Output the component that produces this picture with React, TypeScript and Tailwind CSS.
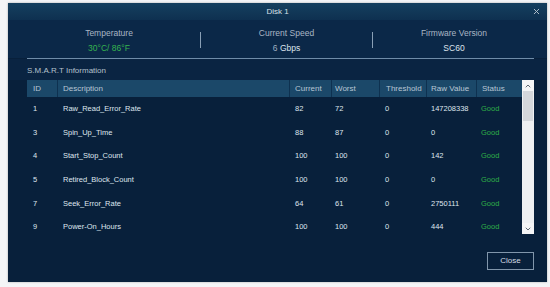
import { ChevronUp, ChevronDown, X } from "lucide-react"

const rows = [
  { id: "1", desc: "Raw_Read_Error_Rate", cur: "82", worst: "72", th: "0", raw: "147208338" },
  { id: "3", desc: "Spin_Up_Time", cur: "88", worst: "87", th: "0", raw: "0" },
  { id: "4", desc: "Start_Stop_Count", cur: "100", worst: "100", th: "0", raw: "142" },
  { id: "5", desc: "Retired_Block_Count", cur: "100", worst: "100", th: "0", raw: "0" },
  { id: "7", desc: "Seek_Error_Rate", cur: "64", worst: "61", th: "0", raw: "2750111" },
  { id: "9", desc: "Power-On_Hours", cur: "100", worst: "100", th: "0", raw: "444" },
]

const cols = "grid grid-cols-[31px_232px_42px_48px_47px_50px_45px]"

export default function App() {
  return (
    <div className="w-[550px] h-[287px] bg-[#f4f5f7] pl-[8px] pt-[3px] font-['Liberation_Sans',Arial,sans-serif]">
      <div className="w-[539px] h-[279px] flex flex-col bg-[#08203b] shadow-[0_0_2px_rgba(0,0,0,0.3)]">
        {/* title bar */}
        <div className="relative h-[17px] flex items-center justify-center bg-gradient-to-b from-[#15405f] to-[#0e3050] text-[8px] text-[#d8e0e8]">
          Disk 1
          <X className="absolute right-[6px] top-[4px] w-[9px] h-[9px] text-[#b8c4d0]" strokeWidth={2.5} />
        </div>

        {/* info */}
        <div className="flex items-center h-[38px] pl-[10px] pt-[2px] bg-[#0b2848]">
          <div className="w-[182px] flex flex-col items-center gap-[5px]">
            <span className="text-[8.5px] text-[#aab6c4] leading-[10px]">Temperature</span>
            <span className="text-[8.5px] text-[#36b34f] leading-[10px]">30°C/ 86°F</span>
          </div>
          <div className="w-px h-[16px] bg-[#8aa0b6]" />
          <div className="w-[171px] flex flex-col items-center gap-[5px]">
            <span className="text-[8.5px] text-[#aab6c4] leading-[10px]">Current Speed</span>
            <span className="text-[8.5px] text-[#dde4ec] leading-[10px]">
              <span className="text-[#9fb0c2]">6 </span>Gbps
            </span>
          </div>
          <div className="w-px h-[16px] bg-[#8aa0b6]" />
          <div className="w-[162px] flex flex-col items-center gap-[5px]">
            <span className="text-[8.5px] text-[#aab6c4] leading-[10px]">Firmware Version</span>
            <span className="text-[8.5px] text-[#dde4ec] leading-[10px]">SC60</span>
          </div>
        </div>
        <div className="ml-[19px] w-[507px] h-px bg-[#6f8ca8]" />

        {/* smart */}
        <div className="pl-[19px] pt-[7px] h-[21px] text-[8px] leading-[10px] text-[#b4c0cc] bg-[#0a2442]">S.M.A.R.T Information</div>

        <div className="flex pl-[19px]">
          <div className="w-[495px]">
            <div className={`${cols} h-[17px] bg-[#1b4869] text-[8px] text-[#b8c6d4] items-center`}>
              <div className="h-full flex items-center pl-[6px] border-r border-[#0e3150]">ID</div>
              <div className="h-full flex items-center pl-[5px] border-r border-[#0e3150]">Description</div>
              <div className="h-full flex items-center pl-[5px] border-r border-[#0e3150]">Current</div>
              <div className="h-full flex items-center pl-[3px] border-r border-[#0e3150]">Worst</div>
              <div className="h-full flex items-center pl-[6px] border-r border-[#0e3150]">Threshold</div>
              <div className="h-full flex items-center pl-[4px] border-r border-[#0e3150]">Raw Value</div>
              <div className="h-full flex items-center pl-[5px]">Status</div>
            </div>
            {rows.map((r) => (
              <div key={r.id} className={`${cols} h-[23.6px] items-center text-[7.5px] text-[#dfe6ee]`}>
                <div className="pl-[6px]">{r.id}</div>
                <div className="pl-[5px]">{r.desc}</div>
                <div className="pl-[5px]">{r.cur}</div>
                <div className="pl-[3px]">{r.worst}</div>
                <div className="pl-[5px]">{r.th}</div>
                <div className="pl-[4px]">{r.raw}</div>
                <div className="pl-[4px] text-[#2fae48]">Good</div>
              </div>
            ))}
          </div>
          <div className="w-[12px] h-[154px] flex flex-col bg-[#eef0f2]">
            <div className="h-[11px] flex items-center justify-center bg-[#f4f5f6]">
              <ChevronUp className="w-[8px] h-[8px] text-[#606a74]" strokeWidth={3} />
            </div>
            <div className="h-[30px] mx-px bg-[#d4d7db]" />
            <div className="flex-1" />
            <div className="h-[11px] flex items-center justify-center bg-[#f4f5f6]">
              <ChevronDown className="w-[8px] h-[8px] text-[#606a74]" strokeWidth={3} />
            </div>
          </div>
        </div>

        {/* footer */}
        <div className="flex-1 flex justify-end items-start pt-[13px] pr-[13px]">
          <button className="w-[47px] h-[18px] border border-[#8196ab] text-[8px] text-[#d4dce4]">Close</button>
        </div>
      </div>
    </div>
  )
}
